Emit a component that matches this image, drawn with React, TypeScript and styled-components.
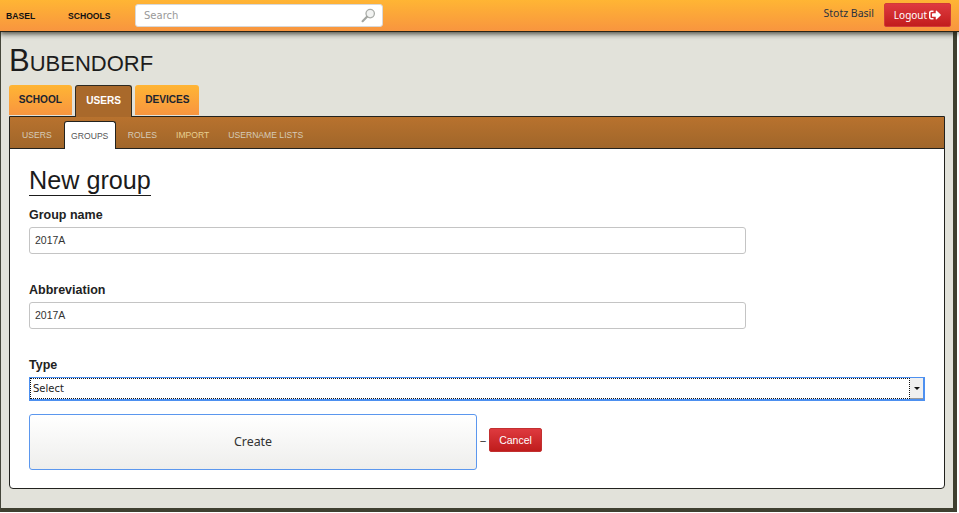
import { createGlobalStyle } from "styled-components";
import styled from "styled-components";
import { FaSignOutAlt } from "react-icons/fa";

const GlobalStyle = createGlobalStyle`
  html, body {
    margin: 0;
    padding: 0;
    background: #fff;
    font-family: "Liberation Sans", Arial, sans-serif;
  }
  * {
    box-sizing: border-box;
  }
`;

const subTabs = ["USERS", "GROUPS", "ROLES", "IMPORT", "USERNAME LISTS"];

export default function App() {
  return (
    <>
      <GlobalStyle />
      <TopBar>
        <TopNav>
          <TopLink $width={62}>BASEL</TopLink>
          <TopLink $width={67}>SCHOOLS</TopLink>
          <SearchBox>
            <SearchInput placeholder="Search" readOnly />
            <SearchIcon width="15" height="15" viewBox="0 0 15 15">
              <circle cx="9.2" cy="5.6" r="4.2" fill="#f2f3f2" stroke="#a9aca8" strokeWidth="1.3" />
              <path d="M6 8.8 L1.6 13.2" stroke="#a3a6a2" strokeWidth="2.2" strokeLinecap="round" />
            </SearchIcon>
          </SearchBox>
        </TopNav>
        <UserArea>
          <UserName>Stotz Basil</UserName>
          <LogoutButton>
            Logout
            <FaSignOutAlt size={12} />
          </LogoutButton>
        </UserArea>
      </TopBar>
      <Frame>
        <Title>Bubendorf</Title>
        <Tabs>
          <Tab>SCHOOL</Tab>
          <Tab $active>USERS</Tab>
          <Tab>DEVICES</Tab>
        </Tabs>
        <Panel>
          <SubBar>
            {subTabs.map((name) => (
              <SubTab key={name} $active={name === "GROUPS"} $gold={name === "IMPORT"}>
                {name}
              </SubTab>
            ))}
          </SubBar>
          <Body>
            <Heading>New group</Heading>
            <Field>
              <Label>Group name</Label>
              <TextInput defaultValue="2017A" />
            </Field>
            <Field>
              <Label>Abbreviation</Label>
              <TextInput defaultValue="2017A" />
            </Field>
            <Field $last>
              <Label>Type</Label>
              <SelectBox>
                <SelectValue>Select</SelectValue>
                <SelectArrow />
              </SelectBox>
            </Field>
            <Actions>
              <CreateButton>Create</CreateButton>
              <Dash>–</Dash>
              <CancelButton>Cancel</CancelButton>
            </Actions>
          </Body>
        </Panel>
      </Frame>
    </>
  );
}

const TopBar = styled.header`
  position: relative;
  z-index: 2;
  height: 32px;
  display: flex;
  justify-content: space-between;
  background: linear-gradient(#ffb534, #f8953f);
  border-bottom: 1px solid #2a2418;
  box-shadow: 0 2px 5px rgba(30, 30, 20, 0.75);
`;

const TopNav = styled.nav`
  display: flex;
  align-items: flex-start;
  padding-left: 6px;
`;

const TopLink = styled.a<{ $width: number }>`
  width: ${(p) => p.$width}px;
  padding-top: 12px;
  font-size: 8.6px;
  line-height: 9px;
  font-weight: 700;
  color: #111;
`;

const SearchBox = styled.div`
  width: 248px;
  height: 23px;
  margin-top: 4px;
  display: flex;
  align-items: center;
  justify-content: space-between;
  padding: 0 6px 0 8px;
  background: #fff;
  border: 1px solid #d8d8d8;
  border-radius: 3px;
`;

const SearchInput = styled.input`
  width: 180px;
  border: 0;
  padding: 0;
  outline: 0;
  font-family: "DejaVu Sans", sans-serif;
  font-size: 10px;
  color: #999;
  &::placeholder {
    color: #999;
  }
`;

const SearchIcon = styled.svg`
  flex: none;
`;

const UserArea = styled.div`
  display: flex;
  align-items: flex-start;
  padding-right: 8px;
`;

const UserName = styled.span`
  margin: 7px 10px 0 0;
  font-family: "Noto Sans", sans-serif;
  font-size: 10.5px;
  line-height: 12px;
  color: #2a3240;
`;

const LogoutButton = styled.button`
  width: 67px;
  height: 24px;
  margin-top: 3px;
  padding: 0;
  display: flex;
  align-items: center;
  justify-content: center;
  gap: 2px;
  font-family: "Noto Sans", sans-serif;
  font-size: 10px;
  color: #fff;
  background: linear-gradient(#de3a3f, #c21d1d);
  border: 1px solid #d13a38;
  border-radius: 2px;
`;

const Frame = styled.main`
  width: 957px;
  height: 480px;
  padding: 12px 8px 0 8px;
  background: #e2e2da;
  border-left: 1px solid #45463a;
  border-right: 4px solid #3f4030;
  border-bottom: 4px solid #3f4030;
`;

const Title = styled.h1`
  margin: 0;
  height: 41px;
  font-size: 31px;
  line-height: 33px;
  font-weight: 400;
  font-variant: small-caps;
  color: #1c1c1c;
`;

const Tabs = styled.div`
  display: flex;
  gap: 3px;
  height: 31px;
`;

const Tab = styled.a<{ $active?: boolean }>`
  height: ${(p) => (p.$active ? "32px" : "30px")};
  padding: 9px ${(p) => (p.$active ? "10.4px" : "9.8px")} 0;
  font-size: 10.1px;
  line-height: 12px;
  font-weight: 700;
  color: ${(p) => (p.$active ? "#fff" : "#1c2430")};
  background: ${(p) => (p.$active ? "#a9692b" : "linear-gradient(#ffb534, #f8953f)")};
  border: ${(p) => (p.$active ? "1px solid #2c2a22" : "0")};
  border-bottom: 0;
  border-radius: 3px 3px 0 0;
  position: relative;
  z-index: 1;
`;

const Panel = styled.section`
  width: 936px;
  height: 373px;
  background: #fff;
  border: 1px solid #22221e;
  border-radius: 0 0 4px 4px;
`;

const SubBar = styled.div`
  height: 32px;
  display: flex;
  align-items: flex-end;
  padding-left: 5px;
  background: linear-gradient(#b8722e, #a0662a);
  border-bottom: 1px solid #22221e;
`;

const SubTab = styled.a<{ $active?: boolean; $gold?: boolean }>`
  height: ${(p) => (p.$active ? "28px" : "24px")};
  margin-bottom: ${(p) => (p.$active ? "-1px" : "0")};
  margin-right: 5px;
  padding: ${(p) => (p.$active ? "9px 6.5px 0" : "6px 7px 0")};
  font-size: 8.6px;
  line-height: 10px;
  color: ${(p) => (p.$active ? "#555" : p.$gold ? "#e8cf90" : "#d6cbb8")};
  background: ${(p) => (p.$active ? "#fff" : "transparent")};
  border: ${(p) => (p.$active ? "1px solid #22221e" : "0")};
  border-bottom: 0;
  border-radius: 3px 3px 0 0;
`;

const Body = styled.div`
  padding: 17px 20px 0 19px;
`;

const Heading = styled.h2`
  display: inline-block;
  margin: 0 0 12px;
  font-size: 25.2px;
  line-height: 29px;
  font-weight: 400;
  color: #1b1b1b;
  border-bottom: 1px solid #1b1b1b;
  vertical-align: top;
`;

const Field = styled.div<{ $last?: boolean }>`
  margin-bottom: ${(p) => (p.$last ? "13px" : "29px")};
`;

const Label = styled.label`
  display: block;
  margin-bottom: 4px;
  font-size: 12.5px;
  line-height: 15px;
  font-weight: 700;
  color: #222;
`;

const TextInput = styled.input`
  display: block;
  width: 717px;
  height: 27px;
  padding: 0 5px 2px;
  font-family: "Liberation Sans", sans-serif;
  font-size: 10.5px;
  color: #333;
  background: #fff;
  border: 1px solid #c4c4c4;
  border-radius: 3px;
  outline: 0;
`;

const SelectBox = styled.div`
  display: flex;
  width: 896px;
  height: 24px;
  border: 1px solid #4d90f0;
  border-right-width: 2px;
  border-bottom-width: 2px;
`;

const SelectValue = styled.div`
  flex: 1;
  padding-left: 3px;
  font-family: "DejaVu Sans", sans-serif;
  font-size: 10px;
  line-height: 21px;
  color: #222;
  outline: 1px dotted #111;
  outline-offset: -1px;
`;

const SelectArrow = styled.div`
  width: 13px;
  display: flex;
  align-items: center;
  justify-content: center;
  background: #f0f0f0;
  border-bottom: 1px solid #999;
  &::after {
    content: "";
    border-left: 3px solid transparent;
    border-right: 3px solid transparent;
    border-top: 3px solid #111;
  }
`;

const Actions = styled.div`
  display: flex;
  align-items: center;
`;

const CreateButton = styled.button`
  width: 448px;
  height: 56px;
  padding-bottom: 2px;
  font-family: "Noto Sans", sans-serif;
  font-size: 12.4px;
  color: #333;
  background: linear-gradient(#fff, #eeeeec);
  border: 1px solid #5b97ee;
  border-radius: 3px;
`;

const Dash = styled.span`
  width: 12px;
  margin-bottom: 4px;
  text-align: center;
  font-size: 10px;
  color: #222;
`;

const CancelButton = styled.button`
  width: 53px;
  height: 24px;
  margin-bottom: 4px;
  padding: 0;
  font-family: "Liberation Sans", sans-serif;
  font-size: 10.5px;
  color: #fff;
  background: linear-gradient(#de3a3f, #bf1c1c);
  border: 1px solid #c23030;
  border-radius: 2px;
`;
